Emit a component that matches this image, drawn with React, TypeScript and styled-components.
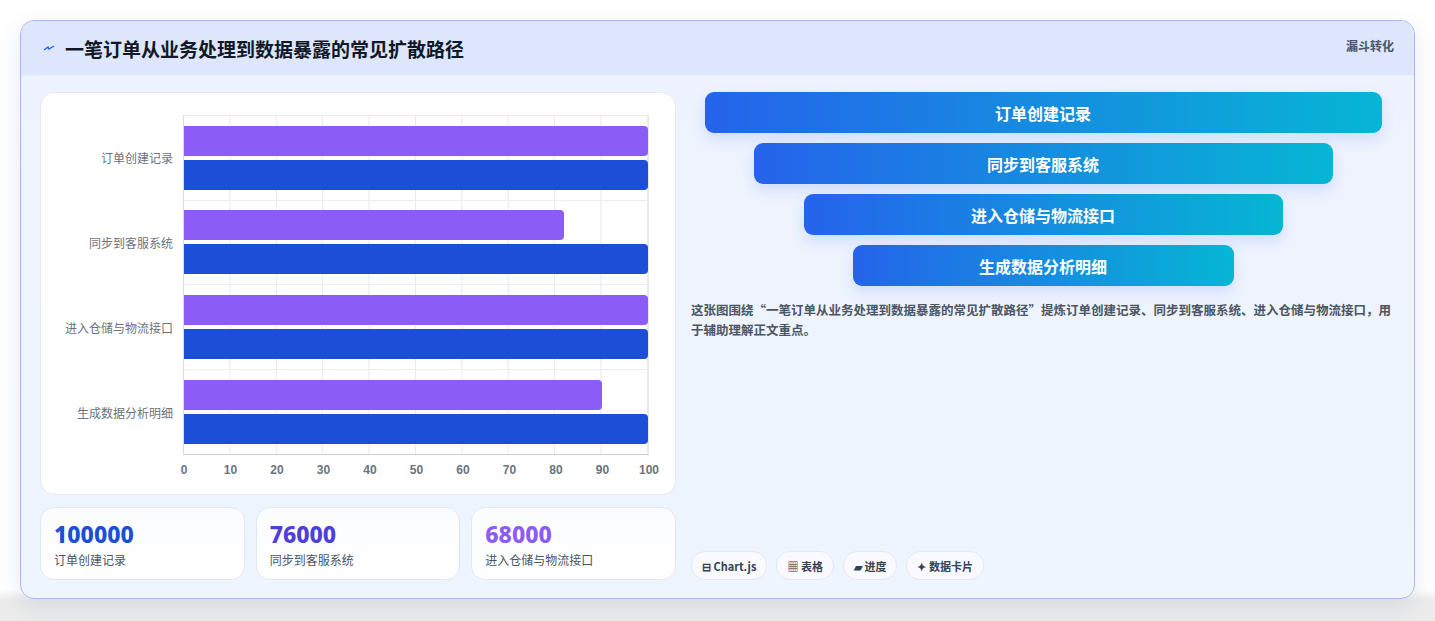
import styled, { createGlobalStyle } from "styled-components";

const Global = createGlobalStyle`
  body { margin: 0; background: #fff; font-family: "Noto Sans CJK SC", "Noto Sans", sans-serif; }
`;

const Page = styled.div`
  padding: 20px 20px 22px 20px;
  height: 621px;
  box-sizing: border-box;
  background: linear-gradient(#fff 590px, #ececec 600px);
`;

const Card = styled.div`
  height: 579px;
  box-sizing: border-box;
  border: 1px solid #a9b9ec;
  border-radius: 14px;
  background: linear-gradient(180deg, #eef2fe, #eef5fe);
  box-shadow: 0 8px 24px rgba(60, 80, 140, 0.12);
  overflow: hidden;
  display: flex;
  flex-direction: column;
`;

const Header = styled.div`
  height: 55px;
  background: #dde6fd;
  display: flex;
  align-items: center;
  justify-content: space-between;
  padding: 0 20px 0 22px;
`;

const Title = styled.h1`
  margin: 0;
  font-size: 19px;
  font-weight: 700;
  color: #111827;
  display: flex;
  align-items: center;
  gap: 10px;
`;

const Tag = styled.span`
  align-self: flex-start;
  margin-top: 16px;
  font-size: 12px;
  font-weight: 700;
  color: #4b5563;
`;

const Body = styled.div`
  flex: 1;
  display: grid;
  grid-template-columns: 636px 1fr;
  gap: 15px;
  padding: 17px 19px 18px 19px;
`;

const Left = styled.div`
  display: flex;
  flex-direction: column;
  gap: 12px;
`;

const ChartBox = styled.div`
  height: 403px;
  box-sizing: border-box;
  background: #fff;
  border: 1px solid #e3e8f3;
  border-radius: 14px;
  padding: 22px 26px 0 0;
  display: grid;
  grid-template-columns: 143px 1fr;
  grid-template-rows: 340px 40px;
`;

const Labels = styled.div`
  display: grid;
  grid-template-rows: repeat(4, 1fr);
  border-right: 1px solid #d8dbe2;
`;

const Label = styled.div`
  display: flex;
  align-items: center;
  justify-content: flex-end;
  padding-right: 10px;
  font-size: 12px;
  color: #6b7280;
`;

const Plot = styled.div`
  position: relative;
  display: grid;
  grid-template-rows: repeat(4, 1fr);
  border-bottom: 1px solid #c9ced8;
  background-image: linear-gradient(90deg, #e7e9ee 1px, transparent 1px);
  background-size: 10% 100%;
  background-position: -1px 0;
  border-top: 1px solid #e7e9ee;
  border-right: 1px solid #e7e9ee;
`;

const Group = styled.div`
  display: flex;
  flex-direction: column;
  justify-content: center;
  gap: 4px;
  border-bottom: 1px solid #eceef2;
  &:last-child { border-bottom: none; }
`;

const Bar = styled.div<{ $c: string }>`
  height: 30px;
  background: ${(p) => p.$c};
  border-radius: 0 4px 4px 0;
`;

const Ticks = styled.div`
  grid-column: 2;
  position: relative;
`;

const Tick = styled.span`
  position: absolute;
  top: 8px;
  transform: translateX(-50%);
  font-size: 12px;
  font-weight: 700;
  color: #6b7280;
  font-family: "Liberation Sans", sans-serif;
`;

const Stats = styled.div`
  display: grid;
  grid-template-columns: repeat(3, 1fr);
  gap: 11px;
`;

const Stat = styled.div`
  height: 73px;
  box-sizing: border-box;
  background: linear-gradient(#fbfcff, #fff);
  border: 1px solid #e1e7f5;
  border-radius: 14px;
  padding: 12px 13px;
`;

const Num = styled.div<{ $c: string }>`
  font-family: "Noto Sans", sans-serif;
  font-size: 23px;
  font-weight: 800;
  line-height: 28px;
  color: ${(p) => p.$c};
`;

const StatLabel = styled.div`
  font-size: 12px;
  color: #4b5563;
  margin-top: 3px;
`;

const Right = styled.div`
  display: flex;
  flex-direction: column;
`;

const Funnel = styled.div`
  display: flex;
  flex-direction: column;
  align-items: center;
  gap: 10px;
`;

const Step = styled.div<{ $w: number }>`
  width: ${(p) => p.$w}px;
  height: 41px;
  border-radius: 9px;
  background: linear-gradient(90deg, #2563eb, #06b6d4);
  box-shadow: 0 6px 14px rgba(37, 99, 235, 0.15);
  color: #fff;
  font-size: 16px;
  font-weight: 700;
  display: flex;
  align-items: center;
  justify-content: center;
`;

const Desc = styled.p`
  margin: 14px 0 0;
  font-size: 12.5px;
  font-weight: 700;
  line-height: 20px;
  color: #4b5563;
`;

const Chips = styled.div`
  margin-top: auto;
  display: flex;
  gap: 9px;
`;

const Chip = styled.span`
  height: 27px;
  padding: 0 10px;
  border-radius: 14px;
  border: 1px solid #e3e8f3;
  background: #f8faff;
  display: flex;
  align-items: center;
  gap: 3px;
  font-size: 11px;
  font-weight: 700;
  color: #374151;
`;

const rows = [
  { name: "订单创建记录", a: 100, b: 100 },
  { name: "同步到客服系统", a: 82, b: 100 },
  { name: "进入仓储与物流接口", a: 100, b: 100 },
  { name: "生成数据分析明细", a: 90, b: 100 },
];

export default function App() {
  return (
    <Page>
      <Global />
      <Card>
        <Header>
          <Title>
            <svg width="12" height="10" viewBox="0 0 12 10">
              <path d="M1 7 L5 4 L6 6 L11 3" stroke="#2563eb" strokeWidth="1.4" fill="none" />
            </svg>
            一笔订单从业务处理到数据暴露的常见扩散路径
          </Title>
          <Tag>漏斗转化</Tag>
        </Header>
        <Body>
          <Left>
            <ChartBox>
              <Labels>
                {rows.map((r) => (
                  <Label key={r.name}>{r.name}</Label>
                ))}
              </Labels>
              <Plot>
                {rows.map((r) => (
                  <Group key={r.name}>
                    <Bar $c="#8b5cf6" style={{ width: `${r.a}%` }} />
                    <Bar $c="#1d4ed8" style={{ width: `${r.b}%` }} />
                  </Group>
                ))}
              </Plot>
              <Ticks>
                {Array.from({ length: 11 }, (_, i) => (
                  <Tick key={i} style={{ left: `${i * 10}%` }}>
                    {i * 10}
                  </Tick>
                ))}
              </Ticks>
            </ChartBox>
            <Stats>
              <Stat>
                <Num $c="#1d4ed8">100000</Num>
                <StatLabel>订单创建记录</StatLabel>
              </Stat>
              <Stat>
                <Num $c="#4f3fd8">76000</Num>
                <StatLabel>同步到客服系统</StatLabel>
              </Stat>
              <Stat>
                <Num $c="#8b5cf6">68000</Num>
                <StatLabel>进入仓储与物流接口</StatLabel>
              </Stat>
            </Stats>
          </Left>
          <Right>
            <Funnel>
              <Step $w={677}>订单创建记录</Step>
              <Step $w={579}>同步到客服系统</Step>
              <Step $w={479}>进入仓储与物流接口</Step>
              <Step $w={381}>生成数据分析明细</Step>
            </Funnel>
            <Desc>
              这张图围绕“一笔订单从业务处理到数据暴露的常见扩散路径”提炼订单创建记录、同步到客服系统、进入仓储与物流接口，用于辅助理解正文重点。
            </Desc>
            <Chips>
              <Chip>⊟ Chart.js</Chip>
              <Chip>▦ 表格</Chip>
              <Chip>▰ 进度</Chip>
              <Chip>✦ 数据卡片</Chip>
            </Chips>
          </Right>
        </Body>
      </Card>
    </Page>
  );
}
